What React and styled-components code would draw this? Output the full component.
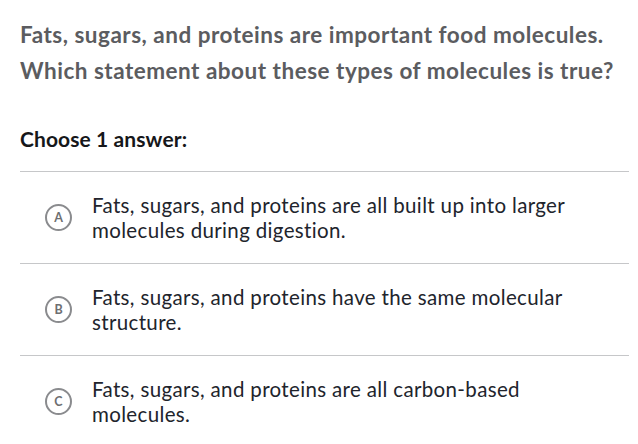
import React from "react";
import styled, { createGlobalStyle } from "styled-components";

const GlobalStyle = createGlobalStyle`
    html, body {
        margin: 0;
        padding: 0;
        background: #FFFFFF;
    }
    body {
        font-family: Lato, "Noto Sans", sans-serif;
    }
`

const Page = styled.div`
    padding: 17px 9px 0 20px;
    width: 638px;
    height: 444px;
    box-sizing: border-box;
    overflow: hidden;
`
const Question = styled.h1`
    margin: 0;
    font-size: 22.5px;
    font-weight: bold;
    letter-spacing: 0.5px;
    line-height: 36px;
    color: #5b5c60;
`
const Prompt = styled.h2`
    margin: 36px 0 18px;
    font-size: 21px;
    font-weight: bold;
    letter-spacing: 0.1px;
    line-height: 28px;
    color: #16171a;
`
const List = styled.ul`
    list-style: none;
    margin: 0;
    padding: 0;
`
const Option = styled.li`
    display: flex;
    align-items: center;
    height: 91px;
    border-top: 1px solid #c6c7c9;
`
const Letter = styled.span`
    display: flex;
    align-items: center;
    justify-content: center;
    flex: none;
    width: 23px;
    height: 23px;
    margin-left: 25px;
    margin-right: 20px;
    border: 2px solid #8a8b8e;
    border-radius: 50%;
    font-size: 12.5px;
    font-weight: bold;
    color: #6d6e71;
`
const Text = styled.span`
    font-size: 20.5px;
    letter-spacing: 0.35px;
    line-height: 25px;
    color: #21242c;
    max-width: 482px;
`

const answers = [
    { letter: "A", text: "Fats, sugars, and proteins are all built up into larger molecules during digestion." },
    { letter: "B", text: "Fats, sugars, and proteins have the same molecular structure." },
    { letter: "C", text: "Fats, sugars, and proteins are all carbon-based molecules." },
]

export default function App() {
    return (
        <>
            <GlobalStyle />
            <Page>
                <Question>
                    Fats, sugars, and proteins are important food molecules.
                    <br />
                    Which statement about these types of molecules is true?
                </Question>
                <Prompt>Choose 1 answer:</Prompt>
                <List>
                    {answers.map((a) => (
                        <Option key={a.letter}>
                            <Letter>{a.letter}</Letter>
                            <Text>{a.text}</Text>
                        </Option>
                    ))}
                </List>
            </Page>
        </>
    )
}
